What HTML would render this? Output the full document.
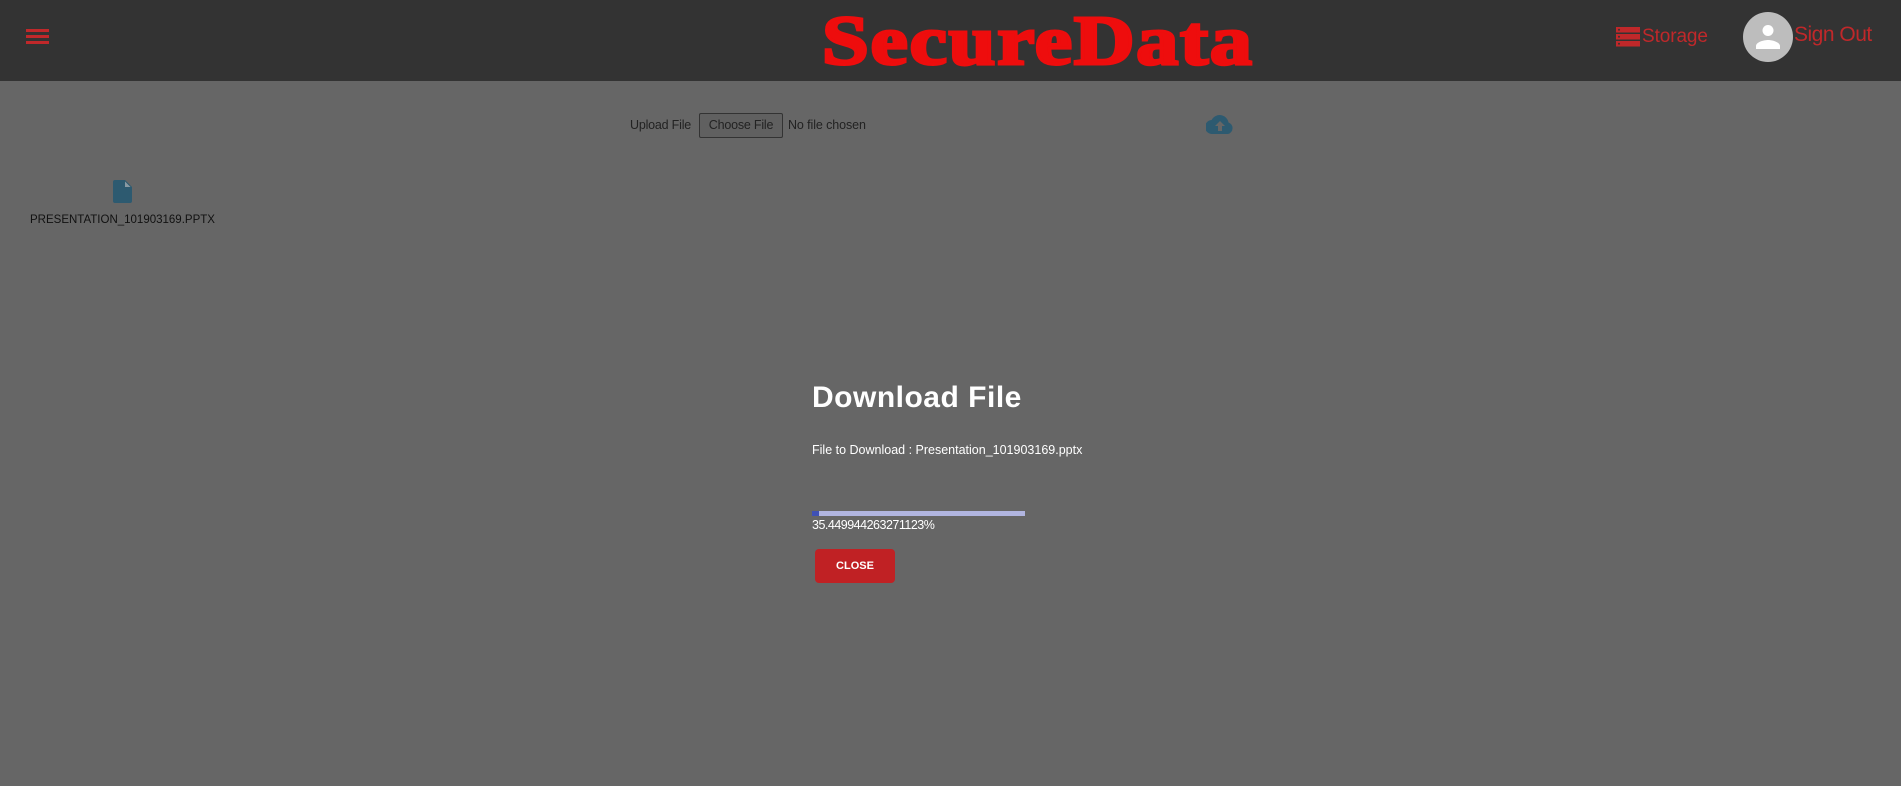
<!DOCTYPE html>
<html><head><meta charset="utf-8"><style>
*{margin:0;padding:0;box-sizing:border-box}
html,body{width:1901px;height:786px;overflow:hidden;background:#666;font-family:"Liberation Sans",sans-serif}
.hdr{position:absolute;left:0;top:0;width:1901px;height:81px;background:#333}
.abs{position:absolute;white-space:nowrap}
.ham{position:absolute;left:26px;width:23px;height:2.5px;background:#c0282a}
.logo{left:822px;top:2px;font-family:"Liberation Serif",serif;font-weight:bold;font-size:70px;color:#ee0d0d;transform-origin:0 0;transform:scaleX(1.2);letter-spacing:1.5px;-webkit-text-stroke:3px #ee0d0d}
.red{color:#c0282a}
</style></head><body>
<div class="hdr">
 <div class="ham" style="top:29px"></div>
 <div class="ham" style="top:35px"></div>
 <div class="ham" style="top:41px"></div>
 <div class="abs logo">SecureData</div>
 <svg class="abs" style="left:1616px;top:27px" width="24" height="20" viewBox="0 0 24 20">
  <g fill="#c0282a"><rect x="0" y="0" width="24" height="5.5"/><rect x="0" y="7" width="24" height="5.5"/><rect x="0" y="14" width="24" height="5.5"/></g>
  <g fill="#333"><circle cx="3" cy="2.7" r="1"/><circle cx="3" cy="9.7" r="1"/><circle cx="3" cy="16.7" r="1"/></g>
 </svg>
 <div class="abs red" style="left:1642px;top:26px;font-size:19px;letter-spacing:-0.1px">Storage</div>
 <svg class="abs" style="left:1743px;top:12px" width="50" height="50" viewBox="0 0 50 50">
  <circle cx="25" cy="25" r="25" fill="#bdbdbd"/>
  <circle cx="25" cy="18.5" r="5.5" fill="#fff"/>
  <path d="M13 37 v-3 c0-4 8-6 12-6 s12 2 12 6 v3z" fill="#fff"/>
 </svg>
 <div class="abs red" style="left:1794px;top:23px;font-size:21px;letter-spacing:-0.5px">Sign Out</div>
</div>
<div class="abs" style="left:630px;top:118px;font-size:12.5px;color:#222;letter-spacing:-0.2px">Upload File</div>
<div class="abs" style="left:699px;top:113px;width:84px;height:25px;border:1px solid #333;border-radius:2px;background:#606060;font-size:12.5px;color:#222;text-align:center;line-height:23px;letter-spacing:-0.2px">Choose File</div>
<div class="abs" style="left:788px;top:118px;font-size:12.5px;color:#222;letter-spacing:-0.1px">No file chosen</div>
<svg class="abs" style="left:1206px;top:115px" width="28" height="20" viewBox="0 0 28 20">
 <path d="M22.5 7.5A9 9 0 0 0 5.6 5 7 7 0 0 0 6.5 19h15.5a6 6 0 0 0 .5-11.5z" fill="#2d5a70"/>
 <path d="M14 6l-5 5h3v5h4v-5h3z" fill="#666"/>
</svg>
<svg class="abs" style="left:113px;top:180px" width="19" height="23" viewBox="0 0 19 23">
 <path d="M2 0h10l7 7v14a2 2 0 0 1-2 2H2a2 2 0 0 1-2-2V2a2 2 0 0 1 2-2z" fill="#2d5a70"/>
 <path d="M12 1.5v5.5h5.5z" fill="#8a9aa3"/>
</svg>
<div class="abs" style="left:30px;top:214px;font-size:11.5px;color:#111">PRESENTATION_101903169.PPTX</div>
<div class="abs" style="left:812px;top:381px;font-size:30px;font-weight:bold;color:#fff;letter-spacing:0.5px">Download File</div>
<div class="abs" style="left:812px;top:443px;font-size:12.5px;color:#fff">File to Download : Presentation_101903169.pptx</div>
<div class="abs" style="left:812px;top:511px;width:213px;height:5px;background:#b1b5e0"></div>
<div class="abs" style="left:812px;top:511px;width:7px;height:5px;background:#3f51b5"></div>
<div class="abs" style="left:812px;top:518px;font-size:12.5px;color:#fff;letter-spacing:-0.5px">35.449944263271123%</div>
<div class="abs" style="left:815px;top:549px;width:80px;height:34px;background:#c02124;border-radius:4px;color:#fff;font-weight:bold;font-size:11px;text-align:center;line-height:34px">CLOSE</div>
</body></html>
